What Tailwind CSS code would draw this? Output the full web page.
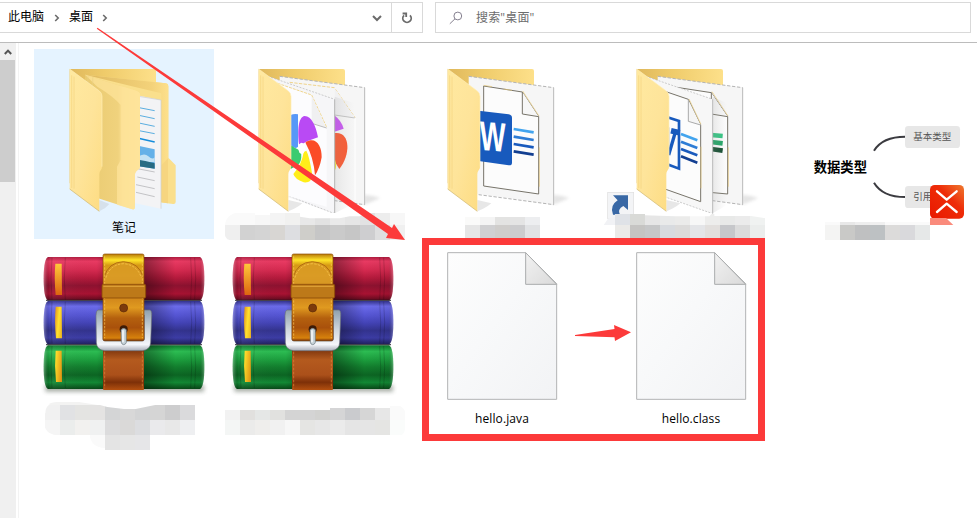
<!DOCTYPE html>
<html lang="zh-CN">
<head>
<meta charset="utf-8">
<title>桌面</title>
<script src="https://cdn.jsdelivr.net/npm/@tailwindcss/browser@4"></script>
</head>
<body class="relative flex h-[518px] w-[977px] flex-col overflow-hidden bg-white text-[12px] text-black [font-family:'Open_Sans','Noto_Sans_CJK_SC',sans-serif]">

<!-- shared icon parts, in units of a third of a pixel -->
<svg class="absolute h-0 w-0" aria-hidden="true">
  <defs>
    <linearGradient id="front" x1="0" y1="0" x2="1" y2="1"><stop offset="0" stop-color="#ffe9a0"/><stop offset=".5" stop-color="#fee49a"/><stop offset="1" stop-color="#fddc82"/></linearGradient>
    <linearGradient id="back" x1="0" y1="0" x2="1" y2="0"><stop offset="0" stop-color="#dfb85c"/><stop offset=".4" stop-color="#efcb6a"/><stop offset="1" stop-color="#fde08a"/></linearGradient>
    <linearGradient id="mid" x1="0" y1="0" x2="1" y2="0"><stop offset="0" stop-color="#dfb960"/><stop offset=".8" stop-color="#f3d27a"/><stop offset="1" stop-color="#fde08c"/></linearGradient>
    <linearGradient id="inner" x1="0" y1="0" x2="1" y2="0"><stop offset="0" stop-color="#e9ca70"/><stop offset=".6" stop-color="#f0d27d"/><stop offset=".7" stop-color="#fbe092"/><stop offset="1" stop-color="#ffe69d"/></linearGradient>
    <linearGradient id="paper" x1="0" y1="0" x2="1" y2="1"><stop offset="0" stop-color="#fdfdfd"/><stop offset=".45" stop-color="#f8f9fa"/><stop offset="1" stop-color="#f2f3f5"/></linearGradient>
    <linearGradient id="fold" x1="0" y1="0" x2="1" y2="1"><stop offset="0" stop-color="#f2f2f2"/><stop offset="1" stop-color="#dadada"/></linearGradient>
    <linearGradient id="shade" x1="0" y1="0" x2="1" y2="0"><stop offset="0" stop-color="#999" stop-opacity=".5"/><stop offset="1" stop-color="#bbb" stop-opacity="0"/></linearGradient>
    <linearGradient id="red" x1="0" y1="0" x2="0" y2="1"><stop offset="0" stop-color="#b01c40"/><stop offset=".1" stop-color="#e83a62"/><stop offset=".3" stop-color="#d52a50"/><stop offset=".48" stop-color="#b51a3c"/><stop offset=".66" stop-color="#8d1230"/><stop offset=".85" stop-color="#a81232"/><stop offset="1" stop-color="#5d0a1d"/></linearGradient>
    <linearGradient id="blue" x1="0" y1="0" x2="0" y2="1"><stop offset="0" stop-color="#34348e"/><stop offset=".12" stop-color="#6b6bea"/><stop offset=".32" stop-color="#5656d4"/><stop offset=".5" stop-color="#4444b8"/><stop offset=".68" stop-color="#33338e"/><stop offset=".85" stop-color="#3c3ca5"/><stop offset="1" stop-color="#20205e"/></linearGradient>
    <linearGradient id="green" x1="0" y1="0" x2="0" y2="1"><stop offset="0" stop-color="#0c7a2c"/><stop offset=".14" stop-color="#2cbc52"/><stop offset=".34" stop-color="#1b9c3c"/><stop offset=".5" stop-color="#127d2d"/><stop offset=".68" stop-color="#0c6523"/><stop offset=".85" stop-color="#128834"/><stop offset="1" stop-color="#084817"/></linearGradient>
    <linearGradient id="ends" x1="0" y1="0" x2="1" y2="0"><stop offset="0" stop-color="#fff" stop-opacity=".35"/><stop offset=".03" stop-color="#000" stop-opacity=".08"/><stop offset=".06" stop-color="#fff" stop-opacity=".05"/><stop offset=".33" stop-color="#000" stop-opacity="0"/><stop offset=".5" stop-color="#000" stop-opacity=".45"/><stop offset=".64" stop-color="#000" stop-opacity=".35"/><stop offset=".82" stop-color="#000" stop-opacity="0"/><stop offset=".97" stop-color="#000" stop-opacity=".05"/><stop offset="1" stop-color="#fff" stop-opacity=".3"/></linearGradient>
    <linearGradient id="tab" x1="0" y1="0" x2="1" y2="1"><stop offset="0" stop-color="#e0901a"/><stop offset=".35" stop-color="#ffe02e"/><stop offset="1" stop-color="#dc8c10"/></linearGradient>
    <linearGradient id="tabred" x1="0" y1="0" x2="0" y2="1"><stop offset="0" stop-color="#ffc93a"/><stop offset="1" stop-color="#dc6410"/></linearGradient>
    <linearGradient id="belt" x1="0" y1="0" x2="0" y2="1"><stop offset="0" stop-color="#b87808"/><stop offset=".07" stop-color="#ffe428"/><stop offset=".13" stop-color="#d79a14"/><stop offset=".25" stop-color="#dfa028"/><stop offset=".45" stop-color="#c87c18"/><stop offset=".62" stop-color="#e09a20"/><stop offset=".74" stop-color="#b4600e"/><stop offset=".85" stop-color="#a9510b"/><stop offset=".97" stop-color="#d7820c"/><stop offset="1" stop-color="#7c3408"/></linearGradient>
    <linearGradient id="belt2" x1="0" y1="0" x2="0" y2="1"><stop offset="0" stop-color="#6f2c08"/><stop offset=".3" stop-color="#b45a1e"/><stop offset=".65" stop-color="#ab501a"/><stop offset=".82" stop-color="#7d3008"/><stop offset="1" stop-color="#b35010"/></linearGradient>
    <linearGradient id="steel" x1="0" y1="0" x2="0" y2="1"><stop offset="0" stop-color="#8ea0ac"/><stop offset=".5" stop-color="#d2d9df"/><stop offset=".85" stop-color="#f4f6fa"/><stop offset="1" stop-color="#a9adb8"/></linearGradient>
    <linearGradient id="xm" x1="0" y1="1" x2="1" y2="0"><stop offset="0" stop-color="#e91800"/><stop offset=".6" stop-color="#ee2c08"/><stop offset="1" stop-color="#ee7a30"/></linearGradient>
    <filter id="soft" x="-20%" y="-100%" width="140%" height="300%"><feGaussianBlur stdDeviation="7"/></filter>
    <filter id="soft2"><feGaussianBlur stdDeviation="4"/></filter>

    <g id="folder-back"><path d="M107 57H360q6 0 6 6V400L107 400Z" fill="url(#back)"/></g>
    <g id="folder-front">
      <path d="M107 57L196 123q8 6 8 16V350q0 6-4 11t-4 12V484L107 417Z" fill="url(#front)"/>
      <path d="M113 76V414M120 80V416" fill="none" stroke="#f5d37e" stroke-width="2"/>
      <path d="M196 484L107 417" stroke="#cdb36a" stroke-width="2"/>
      <path d="M107 57L196 123q8 6 8 16V350" fill="none" stroke="#ffeeb8" stroke-width="2"/>
    </g>
    <g id="sheet">
      <path d="M424 464L472 444Q450 436 424 434Z" fill="#888" opacity=".22" filter="url(#soft2)"/>
      <path d="M170 79L425 113V464L170 428Z" fill="#f6f6f6"/>
      <path d="M170 79L425 113M170 430L425 464" fill="none" stroke="#b4b4b4" stroke-width="3" stroke-dasharray="10 5"/>
      <path d="M425 113V464" stroke="#b9b9b9" stroke-width="3"/>
    </g>
    <g id="file">
      <path d="M98 68H332L425 161V508H98Z" fill="url(#paper)" stroke="#b2b4b5" stroke-width="3"/>
      <path d="M332 68V163H425Z" fill="url(#fold)" stroke="#a9abac" stroke-width="3"/>
    </g>
    <g id="rar">
      <rect x="34" y="420" width="476" height="20" fill="#3a4a38" opacity=".45" filter="url(#soft)"/>
      <g>
        <path d="M42 36H498Q511 42 511 101T498 166H42Q29 160 29 101T42 36Z" fill="url(#red)"/>
        <path d="M42 168H498Q511 174 511 233T498 298H42Q29 292 29 233T42 168Z" fill="url(#blue)"/>
        <path d="M42 301H498Q511 307 511 366T498 432H42Q29 426 29 366T42 301Z" fill="url(#green)"/>
        <path d="M42 36H498Q511 42 511 101T498 166H42Q29 160 29 101T42 36ZM42 168H498Q511 174 511 233T498 298H42Q29 292 29 233T42 168ZM42 301H498Q511 307 511 366T498 432H42Q29 426 29 366T42 301Z" fill="url(#ends)"/>
      </g>
      <path d="M54 38Q48 100 54 164M94 38Q88 100 94 164M54 170Q48 233 54 296M94 170Q88 233 94 296M54 303Q48 366 54 429M94 303Q88 366 94 429M470 38Q476 100 470 164M482 38Q488 100 482 164M470 170Q476 233 470 296M482 170Q488 233 482 296M470 303Q476 366 470 429M482 303Q488 366 482 429" fill="none" stroke="#000" stroke-opacity=".16" stroke-width="3"/>
      <path d="M36 166H504M36 299H504" stroke="#171520" stroke-opacity=".75" stroke-width="4"/>
      <path d="M64 56H83L84 150H65Q60 100 64 56Z" fill="url(#tabred)"/>
      <path d="M65 185H83L84 280H66Q61 230 65 185ZM65 317H83L84 411H66Q61 362 65 317Z" fill="url(#tab)"/>
      <rect x="207" y="306" width="123" height="129" rx="3" fill="url(#belt2)"/>
      <path d="M212 320V430M325 320V430" stroke="#e08a3a" stroke-width="2" stroke-dasharray="8 4"/>
      <path d="M192 195H348Q354 197 353 212L350 292Q349 315 325 317H212Q188 315 187 292L186 212Q186 197 192 195ZM207 210V283Q207 288 213 288H325Q331 288 331 283V210Z" fill="url(#steel)" fill-rule="evenodd" stroke="#69707a" stroke-width="2"/>
      <rect x="207" y="27" width="123" height="260" rx="5" fill="url(#belt)" stroke="#8c4c08" stroke-width="2"/>
      <path d="M212 96Q222 52 268 50Q315 52 325 96V120H212Z" fill="#d89a24" fill-opacity=".8"/>
      <path d="M210 98Q222 52 268 50Q316 52 328 98" fill="none" stroke="#a9610f" stroke-width="2.5"/>
      <path d="M216 98Q228 59 268 56Q309 59 322 98M212 34V280M325 34V280" fill="none" stroke="#ffcc59" stroke-width="2" stroke-dasharray="7 4"/>
      <rect x="204" y="118" width="131" height="41" rx="4" fill="#bd7919" stroke="#8d4a08" stroke-width="2.5"/>
      <path d="M208 124H331" stroke="#e2a63b" stroke-width="3"/>
      <circle cx="269" cy="189" r="12" fill="#7c3b0c" stroke="#5d2906" stroke-width="2"/>
      <circle cx="269" cy="253" r="12" fill="#3c1a06"/>
      <path d="M261 254Q269 246 277 254V292Q275 299 269 299T262 292Z" fill="#c6d2d8" stroke="#66727a" stroke-width="2"/>
      <path d="M267 256V292" stroke="#fff" stroke-width="4"/>
    </g>
  </defs>
</svg>

<header class="flex h-[43px] shrink-0 items-start border-b border-[#bcbcbc] pt-[2px]">
  <nav class="flex h-[31px] w-[423px] items-center border-y border-r border-[#d9d9d9] pl-2">
    <span class="w-9 -translate-y-px whitespace-nowrap leading-none">此电脑</span>
    <svg class="ml-[10px] h-2 w-1.5" viewBox="0 0 6 8" fill="none" stroke="#6b6b6b" stroke-width="1.6"><path d="M1.2 1L4.2 4L1.2 7"/></svg>
    <span class="ml-[9px] w-6 -translate-y-px whitespace-nowrap leading-none">桌面</span>
    <svg class="ml-[9px] h-2 w-1.5" viewBox="0 0 6 8" fill="none" stroke="#6b6b6b" stroke-width="1.6"><path d="M1.2 1L4.2 4L1.2 7"/></svg>
    <svg class="ml-auto mr-[9px] h-[7px] w-[10px] translate-y-px" viewBox="0 0 10 7" fill="none" stroke="#6b6b6b" stroke-width="2"><path d="M1 1L5 5L9 1"/></svg>
    <div class="flex h-full w-[31px] items-center justify-center border-l border-[#d9d9d9]">
      <svg class="h-3 w-3" viewBox="0 0 12 12" fill="none" stroke="#6b6b6b" stroke-width="1.8"><path d="M9 3.3A4.2 4.2 0 1 1 3 3.3"/><path d="M1.6 1.5H5.2V5"/></svg>
    </div>
  </nav>
  <div class="ml-3 flex h-[31px] w-[536px] items-center border border-[#d9d9d9] pl-[13px] text-[#6d6d6d]">
    <svg class="h-[14px] w-[14px]" viewBox="0 0 14 14" fill="none" stroke="#85808f" stroke-width="1"><circle cx="8.8" cy="5" r="3.9"/><path d="M6 7.8L.8 12.8"/></svg>
    <span class="ml-[13px] whitespace-nowrap leading-none tracking-[0.15px]">搜索"桌面"</span>
  </div>
</header>

<div class="flex min-h-0 flex-1">
  <aside class="flex w-4 shrink-0 flex-col bg-[#f0f0f0]">
    <div class="flex h-[17px] items-center justify-center pr-px pt-px">
      <svg class="h-[6px] w-[8px]" viewBox="0 0 8 6" fill="none" stroke="#555" stroke-width="2"><path d="M.8 5L4 1.6L7.2 5"/></svg>
    </div>
    <div class="h-[122px] w-[15px] bg-[#cdcdcd]"></div>
  </aside>
  <main class="ml-[2px] flex-1 border-l border-[#f3f3f3] pl-[15px] pt-[6px]">
    <div class="grid grid-cols-[repeat(5,180px)] grid-rows-[190px_190px] gap-x-[9px] gap-y-px">

      <div class="flex flex-col items-center bg-[#e5f3ff]">
        <svg class="h-[168px] w-[180px] shrink-0" viewBox="0 0 540 504"><g transform="translate(0 3)">
          <use href="#folder-back"/>
          <path d="M196 484Q215 476 226 462L196 450Z" fill="#999" opacity=".2"/>
          <path d="M153 74L395 100q8 1 8 8V323L425 346V456q0 7-8 6L175 430Z" fill="#fadf8c"/>
          <path d="M153 74L395 100q8 1 8 8V323L382 345V130L300 110Z" fill="url(#mid)"/>
          <path d="M382 345L402 325V460L382 457Z" fill="#f6d580"/>
          <path d="M290 132L381 150V476L290 457Z" fill="#f3f3f5"/><path d="M302 137L381 150V476" fill="none" stroke="#ccc" stroke-width="2"/>
          <path d="M310 172L362 182M310 195L362 206M310 218L362 229M310 241L362 251" stroke="#5baee0" stroke-width="3"/>
          <path d="M310 264L362 276" stroke="#168ddb" stroke-width="5"/>
          <path d="M305 286L362 298V356L305 347Z" fill="#65b1e8"/><path d="M310 322Q330 307 343 319T362 322V336H310Z" fill="#c3e2f4"/><path d="M305 328Q335 332 362 340V356L305 347Z" fill="#276b83"/>
          <path d="M310 356L362 366M310 381L362 392M306 404L362 416M306 427L362 440" stroke="#c3c3c6" stroke-width="3"/>
          <path d="M153 74L308 123q10 3 10 12V350q0 5-7 10t-8 12V472q0 8-8 6L153 432Z" fill="url(#inner)"/>
          <path d="M153 74L308 123q10 3 10 12V350q0 5-7 10t-8 12V472q0 8-8 6L249 464V350L260 330V165Q240 140 190 110Z" fill="#fee399" opacity=".75"/>
          <path d="M162 78V120M176 82V130" stroke="#ecd083" stroke-width="2"/>
          <use href="#folder-front"/>
        </g></svg>
        <span class="mt-[5px] whitespace-nowrap leading-none">笔记</span>
      </div>

      <div class="flex flex-col items-center">
        <svg class="h-[190px] w-[180px] shrink-0 overflow-visible" viewBox="0 0 540 570"><g transform="translate(0 3)">
          <use href="#folder-back"/>
          <use href="#sheet"/>
          <path d="M200 97L334 113L396 203" fill="none" stroke="#f0d48c" stroke-width="3" stroke-dasharray="10 4"/>
          <path d="M335 115L396 203L335 195Z" fill="#f1f1f2"/><path d="M335 195L396 204" stroke="#c4c4c4" stroke-width="3"/><path d="M396 204V450" stroke="#fff" stroke-width="3"/>
          <path d="M332 194Q356 212 362 236L332 246Z" fill="#c855f2"/><path d="M332 250C382 240 385 312 349 357L332 330Z" fill="#fa5830"/><path d="M332 320Q345 345 335 363Z" fill="#f3e82c"/>
          <path d="M335 490L395 460V160L335 140Z" fill="url(#shade)" opacity=".35"/>
          <path d="M135 79L335 148V491L195 442V140Z" fill="#f6f6f8"/><path d="M135 79L335 148M190 435L335 491" fill="none" stroke="#b4b4b4" stroke-width="2" stroke-dasharray="6 4"/><path d="M335 148V491" stroke="#b5b5b5" stroke-width="3"/>
          <path d="M164 100L266 135L311 232V470L195 438V140Z" fill="#fcfcfe"/>
          <path d="M164 100L266 135L311 232" fill="none" stroke="#f0d690" stroke-width="3" stroke-dasharray="9 3"/><path d="M266 137V220L309 232Z" fill="#f0f0f1"/><path d="M266 220L311 234" stroke="#bbb" stroke-width="3"/>
          <path d="M203 195Q213 191 225 193V290Q215 300 203 285Z" fill="#5798f8"/>
          <path d="M228 282C224 243 225 201 245 198C266 199 278 227 285 262Q258 270 232 285Z" fill="#b94af4"/>
          <path d="M248 276C279 258 297 287 296 322Q290 356 276 376Q272 323 248 280Z" fill="#fb4c27"/>
          <path d="M250 302Q259 317 268 375Q266 400 242 397Q215 387 211 372Q237 342 242 306Z" fill="#ffee1a"/>
          <path d="M203 285Q221 298 233 302Q239 325 228 343L203 357Z" fill="#3acb70"/>
          <ellipse cx="236" cy="295" rx="10" ry="17" fill="#fff"/>
          <path d="M196 484Q222 474 238 460L196 450Z" fill="#888" opacity=".2"/>
          <use href="#folder-front"/>
        </g><g data-mosaic="6,493,35,fafafa fafafa f7f7f7 f4f4f4 f1f1f0 e8e8e8 e2e2e2 eaeaea e6e6e6 e2e2e3 ededed f7f7f7;6,528,45,efefef d2d2d2 d4d4d4 d8d6d3 dddee1 cfceca c6c6c6 cacaca c6c6c6 ceced0 dededf f0f0f0"></g>
        <path d="M0 490H50Q10 494 6 528V573H20Q4 570 4 545H0ZM96 492H141V498H96ZM231 492H430L410 502H380L350 508H260L231 503Z" fill="#fff"/></svg>
      </div>

      <div class="flex flex-col items-center">
        <svg class="h-[190px] w-[180px] shrink-0 overflow-visible" viewBox="0 0 540 570"><g transform="translate(0 3)">
          <use href="#folder-back"/><use href="#sheet"/>
          <path d="M215 108L331 126L380 200V432L215 408Z" fill="#fcfcfc" stroke="#77746a" stroke-width="3"/><path d="M331 126V192L380 200" fill="#f7f7f7" stroke="#77746a" stroke-width="3"/>
          <path d="M332 123L381 198M382 292V410M215 106L240 110M275 117L300 121" stroke="#e7c878" stroke-width="2"/>
          <path d="M200 182L290 193q10 2 10 11V338q0 9-10 8L200 333Z" fill="#185abd"/>
          <text x="0" y="0" transform="matrix(.84 .07 0 1.1 203 299)" fill="#fff" font-size="112" font-weight="700" class="[font-family:'Liberation_Sans',sans-serif]" textLength="92" lengthAdjust="spacingAndGlyphs">W</text>
          <path d="M305 237L365 247" stroke="#42a4ee" stroke-width="8"/><path d="M305 260L365 270" stroke="#2d7cd5" stroke-width="8"/><path d="M305 282L365 292" stroke="#195abd" stroke-width="8"/><path d="M305 304L365 314" stroke="#133f91" stroke-width="8"/>
          <path d="M196 484Q222 474 238 460L196 450Z" fill="#888" opacity=".2"/>
          <use href="#folder-front"/>
        </g><g data-mosaic="159,504,24,fafaf9 f4f4f4 e3e3e2 e4e4e4 edeef0;159,528,45,e6e6e6 d0d0d2 cfcdcb ccccce e1e2e4"></g></svg>
      </div>

      <div class="flex flex-col items-center">
        <svg class="h-[190px] w-[180px] shrink-0 overflow-visible" viewBox="0 0 540 570"><g transform="translate(0 3)">
          <use href="#folder-back"/><use href="#sheet"/>
          <path d="M227 112L331 128L380 200V432L227 418Z" fill="#fcfcfc" stroke="#77746a" stroke-width="3"/><path d="M331 128V192L380 200" fill="#f7f7f7" stroke="#77746a" stroke-width="3"/>
          <path d="M333 125L381 198M382 292V410" stroke="#e7c878" stroke-width="2"/>
          <path d="M330 255L365 258" stroke="#32c481" stroke-width="14"/><path d="M330 276L365 280" stroke="#20a464" stroke-width="14"/><path d="M330 297L365 302" stroke="#124c2e" stroke-width="14"/>
          <path d="M335 490L378 465V160L335 140Z" fill="url(#shade)" opacity=".4"/>
          <path d="M135 79L335 148V491L195 442V140Z" fill="#f7f7f7"/><path d="M135 79L335 148M190 440L335 491" fill="none" stroke="#b4b4b4" stroke-width="2" stroke-dasharray="6 4"/><path d="M335 148V491" stroke="#b9b9b9" stroke-width="3"/>
          <path d="M186 122L262 148L299 225V455L186 415Z" fill="#fcfcfc" stroke="#77746a" stroke-width="3"/><path d="M262 150V214L299 225" fill="#f5f5f5" stroke="#aaa" stroke-width="3"/>
          <path d="M264 147L300 223M300 290V415" stroke="#e7c878" stroke-width="2"/>
          <path d="M197 201L234 213V356L197 342" fill="none" stroke="#185abd" stroke-width="8"/>
          <path d="M203 232V290" stroke="#c9d1db" stroke-width="6"/>
          <path d="M210 242L236 248" stroke="#185abd" stroke-width="17"/><path d="M222 250L203 315" stroke="#185abd" stroke-width="10"/>
          <path d="M240 252L289 271" stroke="#42a4ee" stroke-width="8"/><path d="M240 275L289 294" stroke="#2d7cd5" stroke-width="8"/><path d="M240 297L289 316" stroke="#195abd" stroke-width="8"/><path d="M240 319L289 338" stroke="#133f91" stroke-width="8"/>
          <path d="M196 484Q222 474 238 460L196 450Z" fill="#888" opacity=".2"/>
          <use href="#folder-front"/>
          <rect x="20" y="427" width="78" height="79" fill="#f3f4f6" stroke="#dedede" stroke-width="2"/>
          <path d="M36 436H81V480L67 468Q48 478 57 494H36Q25 467 50 451Z" fill="#3968a5"/>
        </g><g data-mosaic="-3,495,33,00000000 dfe2e7 d9dad7 e6e6e6 e9eaea ebebea f7f7f7 ededec e8e9e8 ebebeb f0f2f1;-3,528,39,00000000 ebeae8 c5c4c2 c6c7c8 d8dbdf dcdbda e4e5e8 e2dfdd c6c7ca dbdbdb ebedec"></g>
        <path d="M8 528L22 508L42 504V528Z" fill="#f1f2f5"/>
        <path d="M132 492H335L325 502H222L132 499ZM340 492H495V508L450 501H340Z" fill="#fff"/></svg>
      </div>

      <div class="flex flex-col items-center">
        <svg class="h-[190px] w-[180px] shrink-0 overflow-visible [font-family:'Noto_Sans_CJK_SC',sans-serif]" viewBox="0 0 540 570"><g transform="translate(30 153)">
          <path d="M222 152C240 122 275 110 316 110M222 248C240 278 275 291 316 291" fill="none" stroke="#3b3b40" stroke-width="6"/>
          <rect x="315" y="78" width="165" height="66" rx="10" fill="#e7e7e7"/><rect x="315" y="258" width="165" height="66" rx="10" fill="#e7e7e7"/>
          <text x="41" y="215" font-size="40" font-weight="700" fill="#000">数据类型</text>
          <text x="340" y="121" font-size="28.5" fill="#555">基本类型</text>
          <text x="340" y="301" font-size="28.5" fill="#555">引用</text>
          <rect x="390" y="255" width="102" height="101" rx="14" fill="url(#xm)"/>
          <path d="M411 274L440 299L470 274M411 336L440 311L470 336" fill="none" stroke="#fff" stroke-width="7" stroke-linecap="round" stroke-linejoin="round"/>
          <path d="M390 354H438L460 375H390Z" fill="#fa8b7c"/>
        </g><g data-mosaic="105,519,9,fafafa e8e8e8 eeeeee f0f0f0 fafafa fafafa fafafa;105,528,45,f4f4f3 c9c9c7 bfc0c1 bdc1c3 dcdbda d9d9dc e6e8e8"></g></svg>
      </div>

      <div class="flex flex-col items-center">
        <svg class="h-[210px] w-[180px] shrink-0 overflow-visible" viewBox="0 0 540 630"><use href="#rar" y="15"/>
        <path d="M33 520Q33 486 70 486H135L205 497H60Z" fill="#f3f3f2"/>
        <g data-mosaic="33,495,45,f1f1f1 e1e2e4 e4e4e2 e4e3e2 d4d5d6 d8d8d8 d3d4d5 d5d5d5 cdcdce dadadc;33,540,45,f5f5f5 ebedec f2f1ef f0f1f1 dcdcdd dad9d8 dcdde0 eaeaec e8e8e8 eeeff1;168,585,45,fafafa e4e4e4 e6e6e6 e6e6e8"></g>
        <path d="M190 493H375L345 499L305 507H270L220 501ZM31 493H48Q34 500 34 520H31ZM31 555Q36 585 78 587H31ZM166 583Q172 624 213 624V632H166Z" fill="#fff"/></svg>
      </div>

      <div class="flex flex-col items-center">
        <svg class="h-[210px] w-[180px] shrink-0 overflow-visible" viewBox="0 0 540 630"><use href="#rar" y="15"/>
        <g data-mosaic="6,510,30,f2f2f2 e1e0de e5e7e6 e1e1df d4d4d4 d4d4d4 d2d2d0 d5d5d6 cacbce d6d6d6 e7e7e7 fafafa;321,504,6,d5d5d6 cacbce d6d6d6 e7e7e7 fafafa;501,498,6,fafafa;6,540,45,f4f6f5 ebebea efeeec f1f1f1 f7f7f7 e5e5e3 e7e7e7 ebebeb e5e5e5 e5e5e5 e5e5e3 fafcfb"></g>
        <path d="M525 496Q545 502 547 520V496ZM547 560Q546 582 532 587H547Z" fill="#fff"/></svg>
      </div>

      <div class="flex flex-col items-center">
        <svg class="h-[168px] w-[180px] shrink-0" viewBox="0 0 540 504"><use href="#file" x="9" y="-30"/></svg>
        <span class="mt-[5px] whitespace-nowrap leading-none tracking-[0.1px]">hello.java</span>
      </div>

      <div class="flex flex-col items-center">
        <svg class="h-[168px] w-[180px] shrink-0" viewBox="0 0 540 504"><use href="#file" x="9" y="-30"/></svg>
        <span class="mt-[5px] whitespace-nowrap leading-none tracking-[0.1px]">hello.class</span>
      </div>
    </div>
  </main>
</div>

<!-- annotations drawn over the window -->
<svg class="pointer-events-none absolute left-0 top-0 h-[518px] w-[977px]" viewBox="0 0 977 518" fill="#fc3a3a">
  <path d="M97.5 27.8L392 228L394 224L405 240L386 238L388 234L96.8 28.8Z"/>
  <rect x="425.5" y="241.5" width="336" height="196" fill="none" stroke="#fc3a3a" stroke-width="7"/>
  <path d="M575 335L614.5 329L614 325L631 332.3L615 341L614.5 337.3L575 336Z"/>
</svg>

<script>
  // Each row: x, y, height, tile colours (tiles are 45 units wide)
  document.querySelectorAll('[data-mosaic]').forEach(function (g) {
    g.setAttribute('shape-rendering', 'crispEdges');
    g.dataset.mosaic.split(';').forEach(function (row) {
      var p = row.split(',');
      p[3].split(' ').forEach(function (c, i) {
        var r = document.createElementNS('http://www.w3.org/2000/svg', 'rect');
        r.setAttribute('x', +p[0] + i * 45); r.setAttribute('y', p[1]);
        r.setAttribute('width', 45); r.setAttribute('height', p[2]);
        r.setAttribute('fill', '#' + c);
        g.appendChild(r);
      });
    });
  });
</script>
</body>
</html>
